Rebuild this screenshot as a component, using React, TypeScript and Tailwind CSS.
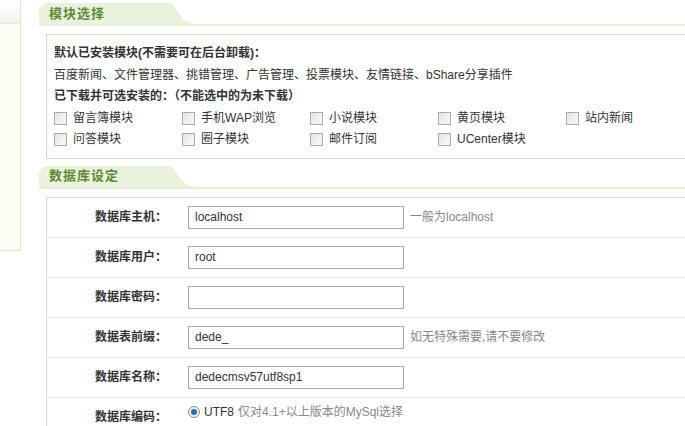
import React from "react"

const font = { fontFamily: '"Liberation Sans", "Noto Sans CJK SC", sans-serif' }

function SectionTab({ title }: { title: string }) {
  return (
    <div className="flex h-[21px] items-end border-b-2 border-[#e5eed8]">
      <div className="flex h-[21px] w-[126px] items-center rounded-tl-[9px] rounded-bl-[3px] bg-[#e8f2dc] pl-[10px]">
        <span className="text-[13px] font-bold tracking-[1px] text-[#5e8a36]">{title}</span>
      </div>
      <svg width="28" height="21" viewBox="0 0 28 21" className="block">
        <path d="M0 0 H3 C12 0 14 20 28 20 V21 H0 Z" fill="#e8f2dc" />
      </svg>
    </div>
  )
}

function Checkbox({ label }: { label: string }) {
  return (
    <div className="flex w-[128px] items-center gap-[6px]">
      <span className="block h-[13px] w-[13px] border border-[#acacac] bg-gradient-to-br from-[#e4e4e4] to-[#fbfbfb]" />
      <span>{label}</span>
    </div>
  )
}

const modules = [
  ["留言簿模块", "手机WAP浏览", "小说模块", "黄页模块", "站内新闻"],
  ["问答模块", "圈子模块", "邮件订阅", "UCenter模块"],
]

const fields = [
  { label: "数据库主机：", value: "localhost", hint: "一般为localhost" },
  { label: "数据库用户：", value: "root", hint: "" },
  { label: "数据库密码：", value: "", hint: "" },
  { label: "数据表前缀：", value: "dede_", hint: "如无特殊需要,请不要修改" },
  { label: "数据库名称：", value: "dedecmsv57utf8sp1", hint: "" },
]

export default function App() {
  return (
    <div className="flex h-[426px] w-[685px] overflow-hidden bg-white text-[12px] text-[#333]" style={font}>
      <div className="h-[251px] w-[21px] shrink-0 border-r border-b border-[#dbe7cb] bg-[#fbfdf5]">
        <div className="h-[24px] border-b border-[#e3ecd6] bg-gradient-to-b from-white to-[#f1f3ef]" />
      </div>

      <div className="ml-[18px] flex-1 pt-[5px]">
        <SectionTab title="模块选择" />

        <div className="mt-[8px] ml-[7px] w-[700px] border border-[#d3dbc8] px-[7px] pt-[8px] pb-[7px] leading-[21.5px]">
          <div className="font-bold">默认已安装模块(不需要可在后台卸载)：</div>
          <div>百度新闻、文件管理器、挑错管理、广告管理、投票模块、友情链接、bShare分享插件</div>
          <div className="font-bold">已下载并可选安装的：（不能选中的为未下载）</div>
          {modules.map((row, i) => (
            <div key={i} className="flex">
              {row.map((m) => (
                <Checkbox key={m} label={m} />
              ))}
            </div>
          ))}
        </div>

        <div className="mt-[9px]">
          <SectionTab title="数据库设定" />
        </div>

        <div className="mt-[8px] ml-[7px] w-[700px] border-t border-l border-[#d3dfc4]">
          {fields.map((f) => (
            <div key={f.label} className="flex h-[40px] items-center border-b border-[#ececec]">
              <div className="w-[120px] text-right font-bold">{f.label}</div>
              <div className="ml-[21px] flex h-[23px] w-[216px] items-center border border-[#a9a9a9] px-[6px]">
                {f.value}
              </div>
              {f.hint && <span className="ml-[6px] text-[#888]">{f.hint}</span>}
            </div>
          ))}
          <div className="flex h-[40px] items-start">
            <div className="w-[120px] pt-[10px] text-right font-bold">数据库编码：</div>
            <div className="ml-[21px] flex items-center gap-[4px] pt-[5px]">
              <span className="flex h-[12px] w-[12px] items-center justify-center rounded-full border border-[#8c8c8c] bg-[#eee]">
                <span className="block h-[6px] w-[6px] rounded-full bg-[#1f6fb5]" />
              </span>
              <span>UTF8</span>
              <span className="text-[#888]">仅对4.1+以上版本的MySql选择</span>
            </div>
          </div>
        </div>
      </div>
    </div>
  )
}
